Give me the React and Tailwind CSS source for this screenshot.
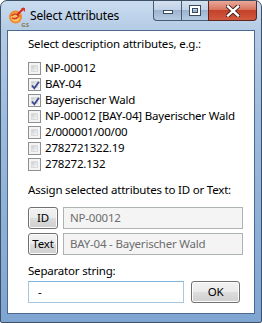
import React from "react";

const items = [
  { label: "NP-00012", checked: false },
  { label: "BAY-04", checked: true },
  { label: "Bayerischer Wald", checked: true },
  { label: "NP-00012 [BAY-04] Bayerischer Wald", checked: false },
  { label: "2/000001/00/00", checked: false },
  { label: "2782721322.19", checked: false },
  { label: "278272.132", checked: false },
];

const txt = "text-[11.5px] tracking-[-0.2px]";

function Checkbox({ checked }) {
  return (
    <div className="w-[13px] h-[13px] border border-[#8e8f8f] bg-[#f4f4f4] p-[2px] shrink-0 relative">
      <div className="w-full h-full bg-gradient-to-br from-[#cbcfd5] to-[#f7f7f7] border border-[#dadada]" />
      {checked && (
        <svg className="absolute left-[1px] top-[1px]" width="11" height="11" viewBox="0 0 11 11">
          <path d="M2 5.5 L4.3 8.3 L9 1.8" fill="none" stroke="#39498d" strokeWidth="1.8" />
        </svg>
      )}
    </div>
  );
}

function WinButton({ children, className = "" }) {
  return (
    <div
      className={
        "h-[22px] rounded-[3px] border border-[#707070] flex items-center justify-center text-[11.5px] tracking-[-0.2px] text-black shrink-0 " +
        "bg-[linear-gradient(to_bottom,#f2f2f2_0%,#ebebeb_49%,#dddddd_50%,#cfcfcf_100%)] shadow-[inset_0_0_0_1px_#fcfcfc] " +
        className
      }
    >
      {children}
    </div>
  );
}

function DisabledField({ value }) {
  return (
    <div className="flex-1 h-[22px] border border-[#adb2b5] bg-[#f4f4f4] flex items-center pl-[6px] text-[11.5px] tracking-[-0.2px] text-[#6d6d6d] whitespace-nowrap">
      {value}
    </div>
  );
}

function AppIcon() {
  return (
    <div className="relative w-[18px] h-[18px] shrink-0">
      <svg width="18" height="18" viewBox="0 0 18 18">
        <circle cx="7.5" cy="10" r="6.5" fill="#f08a2c" />
        <circle cx="7.5" cy="10" r="4.5" fill="#fbc56a" />
        <path d="M3.5 9 Q7 5 11 9 Q8 13 4 11" fill="none" stroke="#d6401f" strokeWidth="1.6" />
        <path d="M9 8 L16 1" stroke="#d62a1a" strokeWidth="2" />
        <path d="M13 1 L17 1 L17 5 Z" fill="#e03020" />
      </svg>
      <span className="absolute right-[-3px] bottom-[-3px] text-[6px] leading-none font-bold text-[#8a7a50]">GS</span>
    </div>
  );
}

export default function App() {
  return (
    <div
      className="w-[262px] h-[323px] relative border border-[#3e5066] rounded-t-[7px] rounded-b-[2px] bg-[linear-gradient(to_bottom,#c9dcf0_0px,#b4cbe5_30px,#9dbbdd_120px,#7ea5d1_323px)] flex flex-col"
      style={{ fontFamily: '"Segoe UI", "Noto Sans", "Open Sans", sans-serif' }}
    >
      {/* title bar */}
      <div className="h-[29px] flex items-start relative">
        <div className="flex items-center pl-[7px] pt-[6px] gap-[3px]">
          <AppIcon />
          <span className="text-[12px] tracking-[-0.2px] text-black leading-[18px] ml-[1px]">Select Attributes</span>
        </div>
        <div className="ml-auto mr-[4px] flex h-[20px]">
          <div className="w-[28px] h-[20px] border border-[#445a75] border-t-0 rounded-bl-[4px] border-r-0 bg-[linear-gradient(to_bottom,#d4e1ef_0%,#c2d3e7_45%,#9db3cf_50%,#b6cbe3_100%)] flex items-center justify-center">
            <div className="w-[10px] h-[4px] bg-white border border-[#3a4b60] mt-[3px]" />
          </div>
          <div className="w-[27px] h-[20px] border border-[#445a75] border-t-0 border-r-0 bg-[linear-gradient(to_bottom,#d4e1ef_0%,#c2d3e7_45%,#9db3cf_50%,#b6cbe3_100%)] flex items-center justify-center">
            <div className="w-[10px] h-[9px] border-[2px] border-white outline outline-1 outline-[#3a4b60] bg-transparent relative">
              <div className="absolute inset-[0px] border border-[#3a4b60]" />
            </div>
          </div>
          <div className="w-[49px] h-[20px] border border-[#5a2420] border-t-0 rounded-br-[4px] bg-[linear-gradient(to_bottom,#e9a99b_0%,#d8755f_45%,#c4412a_50%,#d25a3e_100%)] flex items-center justify-center">
            <svg width="14" height="12" viewBox="0 0 14 12">
              <path d="M2 1.5 L12 10.5 M12 1.5 L2 10.5" stroke="#3b1a16" strokeWidth="4.2" strokeLinecap="square" />
              <path d="M2 1.5 L12 10.5 M12 1.5 L2 10.5" stroke="#ffffff" strokeWidth="2.4" strokeLinecap="square" />
            </svg>
          </div>
        </div>
      </div>

      {/* client area */}
      <div className="mx-[6px] h-[284px] border border-[#4b6a8e] bg-white flex flex-col pl-[20px] pr-[11px] pt-[5px]">
        <div className={"h-[16px] leading-[16px] text-black whitespace-nowrap " + txt}>Select description attributes, e.g.:</div>
        <div className="mt-[8px] flex flex-col">
          {items.map((it) => (
            <div key={it.label} className="h-[16px] flex items-center gap-[4px]">
              <Checkbox checked={it.checked} />
              <span className={"leading-[16px] text-black whitespace-nowrap " + txt}>{it.label}</span>
            </div>
          ))}
        </div>
        <div className={"mt-[10px] h-[16px] leading-[16px] text-black whitespace-nowrap " + txt}>Assign selected attributes to ID or Text:</div>
        <div className="mt-[9px] flex gap-[5px]">
          <WinButton className="w-[30px]">ID</WinButton>
          <DisabledField value="NP-00012" />
        </div>
        <div className="mt-[4px] flex gap-[5px]">
          <WinButton className="w-[30px]">Text</WinButton>
          <DisabledField value="BAY-04 - Bayerischer Wald" />
        </div>
        <div className={"mt-[8px] h-[16px] leading-[16px] text-black whitespace-nowrap " + txt}>Separator string:</div>
        <div className="mt-[2px] flex gap-[7px] items-center">
          <div className={"w-[156px] h-[22px] border border-[#a7c8e2] border-t-[#7eb4dc] bg-white flex items-center pl-[9px] text-black " + txt}>-</div>
          <WinButton className="w-[49px] h-[21px]">OK</WinButton>
        </div>
      </div>
    </div>
  );
}
